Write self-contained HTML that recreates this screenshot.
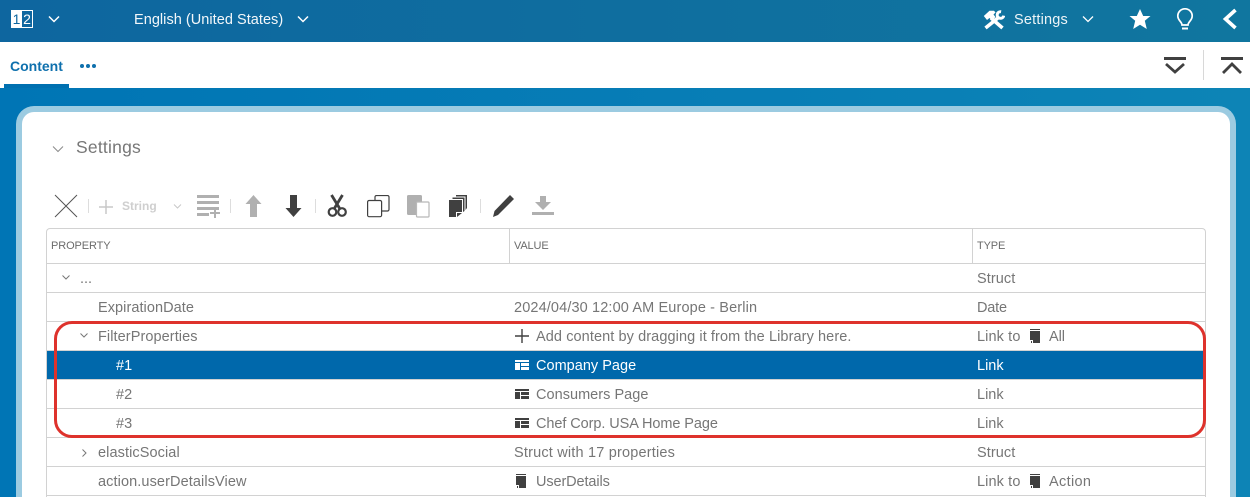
<!DOCTYPE html>
<html><head><meta charset="utf-8"><style>
html,body{margin:0;padding:0;width:1250px;height:497px;overflow:hidden}
body{position:relative;background:#fff;font-family:"Liberation Sans",sans-serif}
#r{left:0;top:0;width:1250px;height:497px;overflow:hidden;background:#fff}
div,span,svg{position:absolute}
.t{white-space:nowrap;font-size:14.5px;line-height:18px;color:#767676}
.h{white-space:nowrap;font-size:11px;line-height:12px;color:#6b6b6b;transform-origin:0 0}
.l{left:47px;width:1158px;height:1px;background:#d2d2d2}
.w{color:#fff}
</style></head><body><div id="r">
<div style="left:0;top:0;width:1250px;height:42px;background:linear-gradient(90deg,#0e669f,#10769f)"></div>
<div style="left:0;top:88px;width:1250px;height:409px;background:linear-gradient(90deg,#0075b5,#0d84b6)"></div>
<div style="left:4px;top:84px;width:65px;height:4px;background:#0070b0"></div>

<!-- header -->
<div style="left:11px;top:10px;width:11px;height:18px;background:#fff"></div>
<div style="left:22px;top:10px;width:11px;height:18px;box-sizing:border-box;border:1px solid #fff;border-left:0"></div>
<div class="t" style="left:11px;top:10px;width:11px;text-align:center;color:#0e669f;font-size:14px">1</div>
<div class="t" style="left:22px;top:10px;width:10px;text-align:center;color:#fff;font-size:14px">2</div>
<svg style="left:47px;top:15px" width="14" height="9" fill="none" stroke="#fff" stroke-width="1.5"><path d="M2 1.500 7 6.500 12 1.500"/></svg>
<div class="t w" style="left:134px;top:11px;letter-spacing:.04px;opacity:.95">English (United States)</div>
<svg style="left:296px;top:15px" width="14" height="9" fill="none" stroke="#fff" stroke-width="1.5"><path d="M2 1.500 7 6.500 12 1.500"/></svg>

<svg style="left:983px;top:10px" width="22" height="20" viewBox="0 0 22 20" fill="none" stroke="#fff"><path d="M8 8 19.500 18" stroke-width="3.600"/><path d="M.8 6 6.500 .8H11L12.500 2.500 10.500 4.500 12.500 7 9 10.500 6.500 8 4 10z" fill="#fff" stroke="none"/><path d="M15.500 7.500 2.500 18" stroke-width="3.600"/><path d="M18.100 1.750A3.300 3.300 0 1 0 20.750 5.600" stroke-width="3"/></svg>
<div class="t w" style="left:1014px;top:11px;letter-spacing:.2px;opacity:.92">Settings</div>
<svg style="left:1081px;top:15px" width="14" height="9" fill="none" stroke="#fff" stroke-width="1.300"><path d="M2 1.500 7 6.500 12 1.500"/></svg>
<svg style="left:1129px;top:9px" width="22" height="21" viewBox="0 0 22 21" fill="#fff"><path d="M11 0 14.200 7H21.500L15.800 11.800 17.800 20 11 15.700 4.200 20 6.200 11.800 .5 7H7.800z"/></svg>
<svg style="left:1176px;top:8px" width="18" height="23" viewBox="0 0 18 23" fill="none" stroke="#fff" stroke-width="1.700"><path d="M6 17C6 13.800 1.800 12.500 1.800 8A7.200 7.200 0 0 1 16.200 8C16.200 12.500 12 13.800 12 17Z"/><path d="M6 20.500H12" stroke-width="2"/></svg>
<svg style="left:1221px;top:8px" width="18" height="22" fill="none" stroke="#fff" stroke-width="3.600"><path d="M14.500 2 4.500 11 14.500 20"/></svg>

<!-- tab bar -->
<div style="left:10px;top:58px;font-size:14px;line-height:16px;font-weight:bold;color:#0e70ad">Content</div>
<div style="left:80px;top:64px;width:4px;height:4px;background:#0e70ad;border-radius:2px"></div>
<div style="left:86px;top:64px;width:4px;height:4px;background:#0e70ad;border-radius:2px"></div>
<div style="left:92px;top:64px;width:4px;height:4px;background:#0e70ad;border-radius:2px"></div>
<svg style="left:1164px;top:57px" width="22" height="19" fill="none" stroke="#404040"><path d="M0 1.500H22" stroke-width="3"/><path d="M2 7 11 15 20 7" stroke-width="2.800"/></svg>
<div style="left:1203px;top:50px;width:1px;height:30px;background:#d8d8d8"></div>
<svg style="left:1221px;top:57px" width="22" height="19" fill="none" stroke="#404040"><path d="M0 1.500H22" stroke-width="3"/><path d="M2 16 11 7 20 16" stroke-width="2.800"/></svg>

<!-- panel -->
<div style="left:16px;top:106px;width:1220px;height:391px;box-sizing:border-box;border:6px solid #9ccbe1;border-bottom:0;border-radius:18px 18px 0 0;background:#fff"></div>
<svg style="left:51px;top:145px" width="14" height="9" fill="none" stroke="#8a8a8a" stroke-width="1"><path d="M2 1.500 7 6.500 12 1.500"/></svg>
<div class="t" style="left:76px;top:137px;font-size:17.500px;line-height:20px;color:#777;letter-spacing:.22px">Settings</div>

<!-- toolbar -->
<svg style="left:54px;top:194px" width="24" height="24" fill="none" stroke="#555" stroke-width="1"><path d="M1 1 23 23M23 1 1 23"/></svg>
<div style="left:88px;top:199px;width:1px;height:14px;background:#ddd"></div>
<svg style="left:98px;top:199px" width="16" height="16" stroke="#c8c8c8" stroke-width="1.500"><path d="M8 1V15M1 8H15"/></svg>
<div style="left:122px;top:199px;font-size:12px;line-height:15px;font-weight:bold;color:#cfcfcf">String</div>
<svg style="left:172px;top:203px" width="11" height="7" fill="none" stroke="#c8c8c8"><path d="M2 1.500 5.500 5 9 1.500"/></svg>
<svg style="left:197px;top:195px" width="24" height="23" fill="#b0b0b0"><rect x="0" y="0" width="22" height="3"/><rect x="0" y="6" width="22" height="3"/><rect x="0" y="12" width="22" height="3"/><rect x="0" y="18" width="12" height="3"/><path d="M17 13h2v4h4v2h-4v4h-2v-4h-4v-2h4z"/></svg>
<div style="left:230px;top:199px;width:1px;height:14px;background:#ddd"></div>
<svg style="left:245px;top:195px" width="17" height="23" fill="#b0b0b0"><path d="M8.500 0 16.500 9H12V22H5V9H.5z"/></svg>
<svg style="left:285px;top:195px" width="17" height="23" fill="#404040"><path d="M8.500 22 16.500 13H12V0H5V13H.5z"/></svg>
<div style="left:315px;top:199px;width:1px;height:14px;background:#ddd"></div>
<svg style="left:327px;top:194px" width="21" height="24" fill="none" stroke="#404040"><path d="M4.500 1 13 15M15.500 1 7 15" stroke-width="2.800"/><circle cx="5.500" cy="18" r="3.800" stroke-width="2.200"/><circle cx="15" cy="18" r="3.800" stroke-width="2.200"/></svg>
<svg style="left:367px;top:195px" width="23" height="23" fill="none" stroke="#404040" stroke-width="1.200"><path d="M8 5V2a1.500 1.500 0 0 1 1.500-1.500H20.500a1.500 1.500 0 0 1 1.500 1.500V14.500a1.500 1.500 0 0 1-1.500 1.500H15"/><rect x=".6" y="5.500" width="14" height="16.200" rx="1.500"/></svg>
<svg style="left:407px;top:195px" width="23" height="23"><rect x="0" y="0" width="15" height="20" rx="1.500" fill="#b0b0b0"/><rect x="9.500" y="7" width="12.500" height="15" rx="1" fill="#fff" stroke="#b8b8b8" stroke-width="1.200"/></svg>
<svg style="left:449px;top:195px" width="19" height="23" fill="#404040"><path d="M7 0H18V13L16.500 15V1.500H7z"/><path d="M3.500 2.500H15.500V16L14 17V4H3.500z"/><path d="M0 5H13V17H7V22H0z"/><path d="M8 22 13 18H8z"/></svg>
<div style="left:480px;top:199px;width:1px;height:14px;background:#ddd"></div>
<svg style="left:492px;top:195px" width="23" height="23" fill="#404040"><path d="M18 0 22 4 6 20 1 22 2.500 16z"/></svg>
<svg style="left:532px;top:196px" width="22" height="20" fill="#b0b0b0"><path d="M8 0H14V6H19L11 14 3 6H8z"/><rect x="0" y="16" width="22" height="3"/></svg>

<!-- table -->
<div style="left:46px;top:228px;width:1160px;height:269px;box-sizing:border-box;border:1px solid #d2d2d2;border-bottom:0;border-radius:4px 4px 0 0"></div>
<div class="h" style="left:51px;top:240px;letter-spacing:-.1px">PROPERTY</div>
<div class="h" style="left:514px;top:240px;letter-spacing:-.15px">VALUE</div>
<div class="h" style="left:977px;top:240px;letter-spacing:-.15px">TYPE</div>
<div style="left:509px;top:229px;width:1px;height:34px;background:#d2d2d2"></div>
<div style="left:972px;top:229px;width:1px;height:34px;background:#d2d2d2"></div>

<div style="left:47px;top:351px;width:1158px;height:28px;background:#0068ab"></div>
<div class="l" style="top:263px"></div><div class="l" style="top:292px"></div><div class="l" style="top:321px"></div><div class="l" style="top:350px"></div><div class="l" style="top:379px"></div><div class="l" style="top:408px"></div><div class="l" style="top:437px"></div><div class="l" style="top:466px"></div><div class="l" style="top:495px"></div>

<svg style="left:61px;top:274px" width="11" height="7" fill="none" stroke="#777"><path d="M1.500 1.500 5 5 8.500 1.500"/></svg>
<div class="t" style="left:80px;top:270px">...</div>
<div class="t" style="left:977px;top:270px;letter-spacing:.07px">Struct</div>

<div class="t" style="left:98px;top:299px;letter-spacing:.06px">ExpirationDate</div>
<div class="t" style="left:514px;top:299px;letter-spacing:.13px">2024/04/30 12:00 AM Europe - Berlin</div>
<div class="t" style="left:977px;top:299px;letter-spacing:-.2px">Date</div>

<svg style="left:79px;top:332px" width="11" height="7" fill="none" stroke="#777"><path d="M1.500 1.500 5 5 8.500 1.500"/></svg>
<div class="t" style="left:98px;top:328px;letter-spacing:.08px">FilterProperties</div>
<svg style="left:515px;top:329px" width="14" height="14" stroke="#404040" stroke-width="1.400"><path d="M7 0V14M0 7H14"/></svg>
<div class="t" style="left:536px;top:328px;letter-spacing:.09px">Add content by dragging it from the Library here.</div>
<div class="t" style="left:977px;top:328px;letter-spacing:.11px">Link to</div>
<svg style="left:1030px;top:329px" width="10" height="14" fill="#404040"><path d="M0 0H10V1H0zM0 2H10V14H3V11H0zM1 12H2V14H1z"/></svg>
<div class="t" style="left:1049px;top:328px;letter-spacing:-.1px">All</div>

<div class="t w" style="left:116px;top:357px">#1</div>
<svg style="left:515px;top:360px" width="14" height="11" fill="#fff"><path d="M0 0H14V2H0zM0 3H5V10H0zM6 3H14V6H6zM6 7H14V10H6z"/></svg>
<div class="t w" style="left:536px;top:357px;letter-spacing:.02px">Company Page</div>
<div class="t w" style="left:977px;top:357px">Link</div>

<div class="t" style="left:116px;top:386px">#2</div>
<svg style="left:515px;top:389px" width="14" height="11" fill="#404040"><path d="M0 0H14V2H0zM0 3H5V10H0zM6 3H14V6H6zM6 7H14V10H6z"/></svg>
<div class="t" style="left:536px;top:386px;letter-spacing:.03px">Consumers Page</div>
<div class="t" style="left:977px;top:386px">Link</div>

<div class="t" style="left:116px;top:415px">#3</div>
<svg style="left:515px;top:418px" width="14" height="11" fill="#404040"><path d="M0 0H14V2H0zM0 3H5V10H0zM6 3H14V6H6zM6 7H14V10H6z"/></svg>
<div class="t" style="left:536px;top:415px;letter-spacing:-.08px">Chef Corp. USA Home Page</div>
<div class="t" style="left:977px;top:415px">Link</div>

<svg style="left:81px;top:448px" width="7" height="11" fill="none" stroke="#777"><path d="M1.500 1.500 5 5 1.500 8.500"/></svg>
<div class="t" style="left:98px;top:444px;letter-spacing:.09px">elasticSocial</div>
<div class="t" style="left:514px;top:444px;letter-spacing:.19px">Struct with 17 properties</div>
<div class="t" style="left:977px;top:444px;letter-spacing:.07px">Struct</div>

<div class="t" style="left:98px;top:473px;letter-spacing:.1px">action.userDetailsView</div>
<svg style="left:516px;top:474px" width="10" height="14" fill="#404040"><path d="M0 0H10V1H0zM0 2H10V14H3V11H0zM1 12H2V14H1z"/></svg>
<div class="t" style="left:536px;top:473px;letter-spacing:-.11px">UserDetails</div>
<div class="t" style="left:977px;top:473px;letter-spacing:.11px">Link to</div>
<svg style="left:1030px;top:474px" width="10" height="14" fill="#404040"><path d="M0 0H10V1H0zM0 2H10V14H3V11H0zM1 12H2V14H1z"/></svg>
<div class="t" style="left:1049px;top:473px;letter-spacing:.33px">Action</div>

<!-- red highlight -->
<div style="left:54px;top:321px;width:1152px;height:117px;box-sizing:border-box;border:3px solid #de322c;border-radius:18px"></div>
</div></body></html>
